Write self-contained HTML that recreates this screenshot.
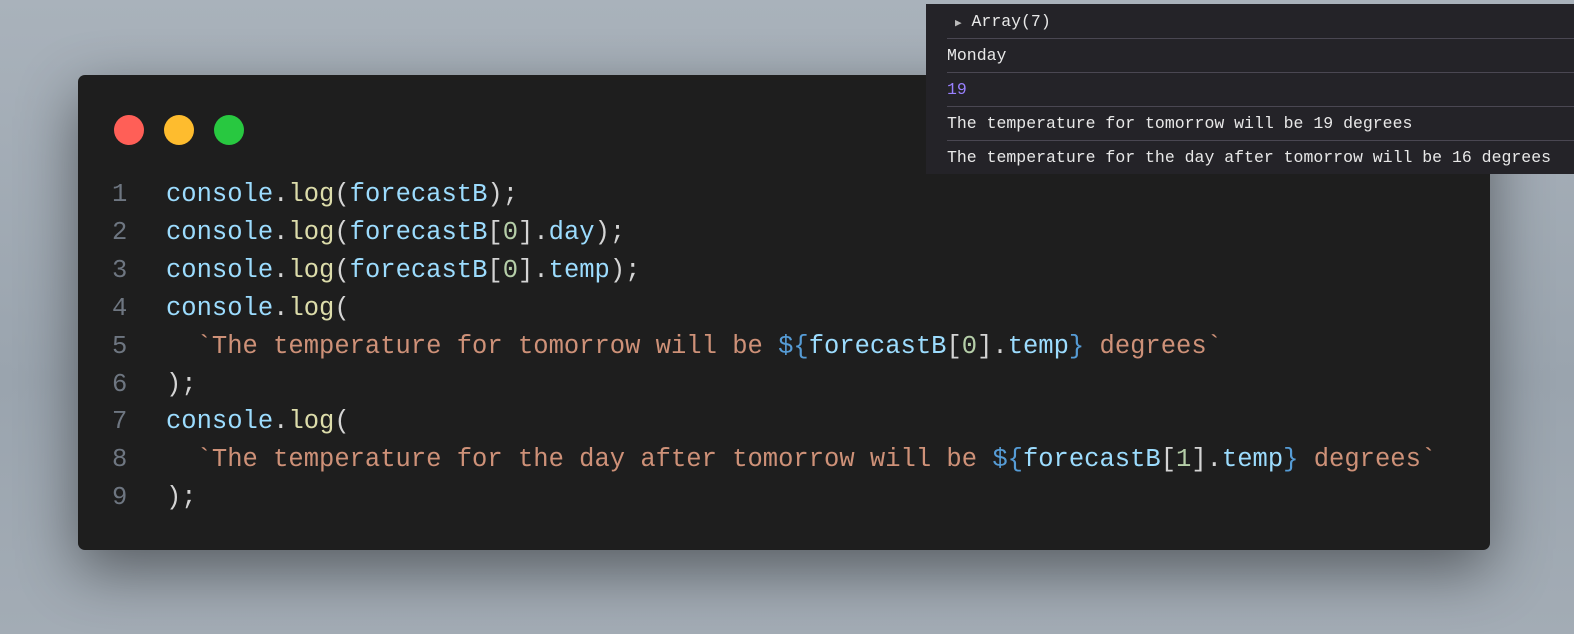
<!DOCTYPE html>
<html><head><style>
body{margin:0;width:1574px;height:634px;overflow:hidden;background:linear-gradient(180deg,#a9b2bb 0%,#9aa4ae 60%,#a3acb5 100%);position:relative;font-family:"Liberation Mono",monospace}
.card{position:absolute;left:78px;top:75px;width:1412px;height:475px;background:#1e1e1e;border-radius:7px;box-shadow:0 20px 60px rgba(0,0,0,.45)}
.dot{position:absolute;top:115px;width:30px;height:30px;border-radius:50%}
.code{position:absolute;left:0;top:176px;font-size:25.5px;line-height:37.9px;white-space:pre;color:#d4d4d4}
.ln{display:inline-block;width:166px;text-align:left;color:#6e7681;box-sizing:border-box;padding-left:112px}
.v{color:#9cdcfe}.f{color:#dcdcaa}.n{color:#b5cea8}.s{color:#ce9178}.k{color:#569cd6}
.con{position:absolute;left:926px;top:4px;width:648px;height:170px;background:#242328;font-size:16.5px;color:#e8e8e8}
.row{position:absolute;left:21px;right:0;height:33px;line-height:33px}
.sep{position:absolute;left:21px;right:0;height:1px;background:#4a4752}
</style></head><body>
<div class="card"></div>
<div class="dot" style="left:114px;background:#ff5f57"></div>
<div class="dot" style="left:164px;background:#febc2e"></div>
<div class="dot" style="left:214px;background:#28c840"></div>
<div class="code"><span class="ln">1</span><span class="v">console</span>.<span class="f">log</span>(<span class="v">forecastB</span>);
<span class="ln">2</span><span class="v">console</span>.<span class="f">log</span>(<span class="v">forecastB</span>[<span class="n">0</span>].<span class="v">day</span>);
<span class="ln">3</span><span class="v">console</span>.<span class="f">log</span>(<span class="v">forecastB</span>[<span class="n">0</span>].<span class="v">temp</span>);
<span class="ln">4</span><span class="v">console</span>.<span class="f">log</span>(
<span class="ln">5</span>  <span class="s">`The temperature for tomorrow will be </span><span class="k">${</span><span class="v">forecastB</span>[<span class="n">0</span>].<span class="v">temp</span><span class="k">}</span><span class="s"> degrees`</span>
<span class="ln">6</span>);
<span class="ln">7</span><span class="v">console</span>.<span class="f">log</span>(
<span class="ln">8</span>  <span class="s">`The temperature for the day after tomorrow will be </span><span class="k">${</span><span class="v">forecastB</span>[<span class="n">1</span>].<span class="v">temp</span><span class="k">}</span><span class="s"> degrees`</span>
<span class="ln">9</span>);</div>
<div class="con">
<div class="row" style="top:1px;left:29px"><span style="font-size:11px;color:#bbb">▶</span> Array(7)</div>
<div class="sep" style="top:34px"></div>
<div class="row" style="top:35px">Monday</div>
<div class="sep" style="top:68px"></div>
<div class="row" style="top:69px;color:#9980ff">19</div>
<div class="sep" style="top:102px"></div>
<div class="row" style="top:103px">The temperature for tomorrow will be 19 degrees</div>
<div class="sep" style="top:136px"></div>
<div class="row" style="top:137px">The temperature for the day after tomorrow will be 16 degrees</div>
</div>
</body></html>
